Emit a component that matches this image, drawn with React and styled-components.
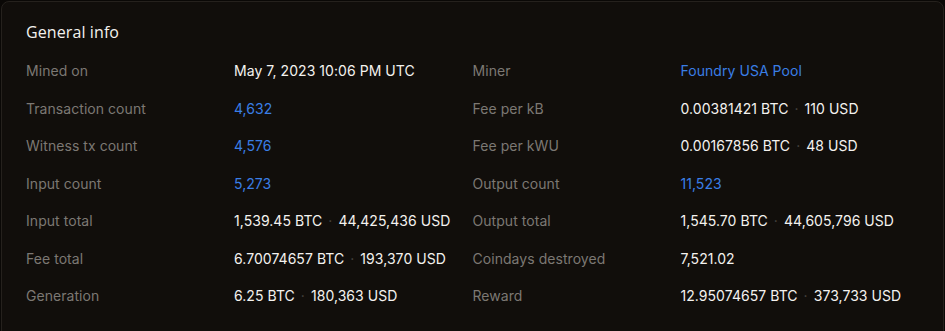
import { Fragment } from "react";
import styled, { createGlobalStyle } from "styled-components";

const GlobalStyle = createGlobalStyle`
	html, body {
		margin: 0;
		padding: 0;
		background: #0a0806;
		overflow: hidden;
	}

	body {
		font-family: Inter, "Liberation Sans", sans-serif;
		-webkit-font-smoothing: antialiased;
	}
`;

const Card = styled.section`
	box-sizing: border-box;
	margin: 1px 1px 0 1px;
	height: 340px;
	padding: 18px 24px;

	background: #110e0b;
	border: 1px solid #25211d;
	border-radius: 8px;
`;

const Title = styled.h2`
	margin: 0 0 8px;
	font-family: "Open Sans", Inter, sans-serif;
	font-size: 16px;
	font-weight: 500;
	letter-spacing: 0.1px;
	line-height: 24px;
	color: #f4f2ef;
`;

const Grid = styled.dl`
	margin: 0;
	display: grid;
	grid-template-columns: 208px 1fr 208px 1fr;
	grid-auto-rows: 37.5px;
	align-items: center;
	font-size: 14px;
	letter-spacing: 0.05px;
`;

const Label = styled.dt`
	color: #7c7873;
`;

const Value = styled.dd`
	margin: 0;
	color: ${({ $link }) => ($link ? "#3a7ee6" : "#f4f2ef")};
`;

const Dot = styled.span`
	margin: 0 6px;
	color: #4a4642;
`;

const rows = [
	["Mined on", "May 7, 2023 10:06 PM UTC", "Miner", "Foundry USA Pool", false, true],
	["Transaction count", "4,632", "Fee per kB", ["0.00381421 BTC", "110 USD"], true, false],
	["Witness tx count", "4,576", "Fee per kWU", ["0.00167856 BTC", "48 USD"], true, false],
	["Input count", "5,273", "Output count", "11,523", true, true],
	["Input total", ["1,539.45 BTC", "44,425,436 USD"], "Output total", ["1,545.70 BTC", "44,605,796 USD"], false, false],
	["Fee total", ["6.70074657 BTC", "193,370 USD"], "Coindays destroyed", "7,521.02", false, false],
	["Generation", ["6.25 BTC", "180,363 USD"], "Reward", ["12.95074657 BTC", "373,733 USD"], false, false],
];

const Amount = ({ value }) =>
	Array.isArray(value) ? (
		<>
			{value[0]}
			<Dot>·</Dot>
			{value[1]}
		</>
	) : (
		value
	);

const App = () => {
	return (
		<>
			<GlobalStyle />
			<Card>
				<Title>General info</Title>
				<Grid>
					{rows.map(([l1, v1, l2, v2, link1, link2]) => (
						<Fragment key={l1}>
							<Label>{l1}</Label>
							<Value $link={link1}><Amount value={v1} /></Value>
							<Label>{l2}</Label>
							<Value $link={link2}><Amount value={v2} /></Value>
						</Fragment>
					))}
				</Grid>
			</Card>
		</>
	);
};

export default App;
